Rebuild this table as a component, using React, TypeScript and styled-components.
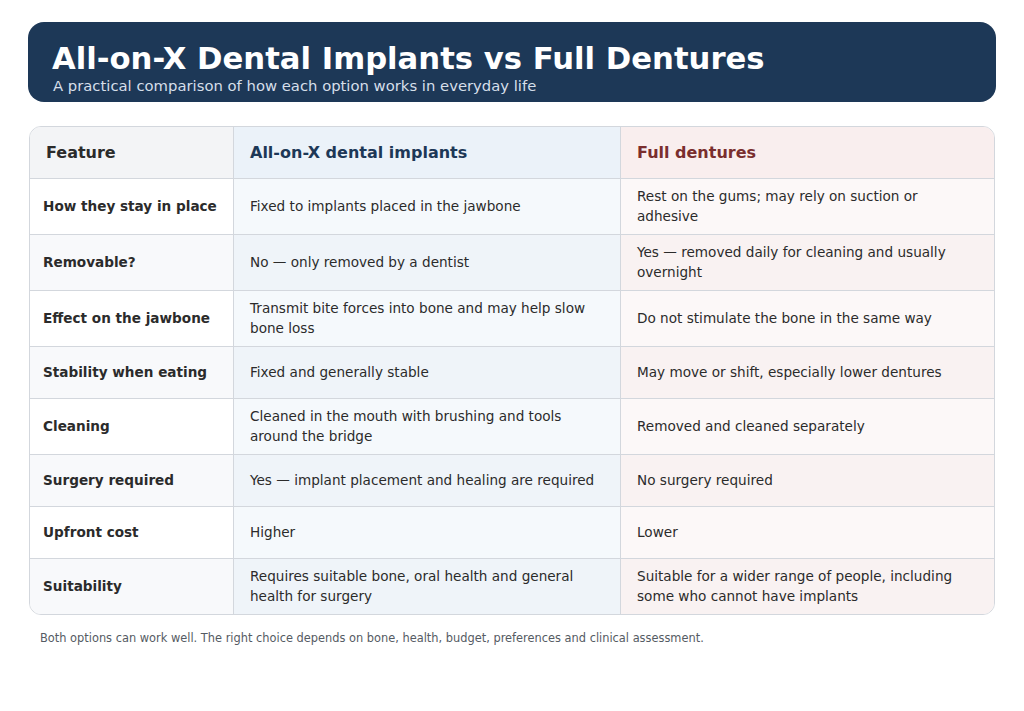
import React from 'react';
import styled, { createGlobalStyle } from 'styled-components';

const GlobalStyle = createGlobalStyle`
  body {
    margin: 0;
    background: #ffffff;
    font-family: 'DejaVu Sans', 'Liberation Sans', sans-serif;
    color: #2b2b2b;
  }
`;

const Page = styled.div`
  width: 1024px;
  padding: 22px 28px;
  box-sizing: border-box;
`;

const Banner = styled.header`
  height: 80px;
  box-sizing: border-box;
  padding: 18px 24px 0;
  background: #1d3857;
  border-radius: 16px;
  color: #ffffff;
`;

const Title = styled.h1`
  margin: 0;
  font-size: 30.7px;
  line-height: 37px;
  font-weight: 700;
`;

const Subtitle = styled.p`
  margin: 0 0 0 1px;
  font-size: 14.8px;
  line-height: 18px;
  color: #d6dfea;
`;

const Table = styled.div`
  margin: 24px 1px 0;
  border: 1px solid #d3d7dd;
  border-radius: 12px;
  overflow: hidden;
  display: grid;
  grid-template-columns: 204px 387px 1fr;
`;

type Tone = 'feature' | 'implant' | 'denture';

const headBg: Record<Tone, string> = {
  feature: '#f3f4f6',
  implant: '#ebf2f9',
  denture: '#f9eeee',
};

const headInk: Record<Tone, string> = {
  feature: '#2b2b2b',
  implant: '#1d3857',
  denture: '#7a2e2e',
};

const cellBg: Record<Tone, [string, string]> = {
  feature: ['#ffffff', '#f8f9fb'],
  implant: ['#f5f9fc', '#eff4f9'],
  denture: ['#fcf8f8', '#f9f2f2'],
};

const HeadCell = styled.div<{ $tone: Tone; $last?: boolean }>`
  height: 52px;
  box-sizing: border-box;
  display: flex;
  align-items: center;
  padding: 0 16px;
  background: ${(p) => headBg[p.$tone]};
  color: ${(p) => headInk[p.$tone]};
  font-size: 16px;
  font-weight: 700;
  border-bottom: 1px solid #d3d7dd;
  border-right: ${(p) => (p.$last ? 'none' : '1px solid #d3d7dd')};
`;

const Cell = styled.div<{ $tone: Tone; $even: boolean; $last?: boolean; $bottom?: boolean }>`
  min-height: 52px;
  box-sizing: border-box;
  display: flex;
  align-items: center;
  padding: 8px 16px 8px ${(p) => (p.$tone === 'feature' ? '13px' : '16px')};
  background: ${(p) => cellBg[p.$tone][p.$even ? 1 : 0]};
  font-size: 13.6px;
  line-height: 19.5px;
  font-weight: ${(p) => (p.$tone === 'feature' ? 700 : 400)};
  color: #2b2b2b;
  border-bottom: ${(p) => (p.$bottom ? 'none' : '1px solid #d3d7dd')};
  border-right: ${(p) => (p.$last ? 'none' : '1px solid #d3d7dd')};
`;

const Note = styled.p`
  margin: 16px 0 0 12px;
  font-size: 11.4px;
  color: #555b63;
`;

const rows: [string, string, string][] = [
  ['How they stay in place', 'Fixed to implants placed in the jawbone', 'Rest on the gums; may rely on suction or adhesive'],
  ['Removable?', 'No — only removed by a dentist', 'Yes — removed daily for cleaning and usually overnight'],
  ['Effect on the jawbone', 'Transmit bite forces into bone and may help slow bone loss', 'Do not stimulate the bone in the same way'],
  ['Stability when eating', 'Fixed and generally stable', 'May move or shift, especially lower dentures'],
  ['Cleaning', 'Cleaned in the mouth with brushing and tools around the bridge', 'Removed and cleaned separately'],
  ['Surgery required', 'Yes — implant placement and healing are required', 'No surgery required'],
  ['Upfront cost', 'Higher', 'Lower'],
  ['Suitability', 'Requires suitable bone, oral health and general health for surgery', 'Suitable for a wider range of people, including some who cannot have implants'],
];

const tones: Tone[] = ['feature', 'implant', 'denture'];

export default function App() {
  return (
    <>
      <GlobalStyle />
      <Page>
        <Banner>
          <Title>All-on-X Dental Implants vs Full Dentures</Title>
          <Subtitle>A practical comparison of how each option works in everyday life</Subtitle>
        </Banner>
        <Table>
          <HeadCell $tone="feature">Feature</HeadCell>
          <HeadCell $tone="implant">All-on-X dental implants</HeadCell>
          <HeadCell $tone="denture" $last>Full dentures</HeadCell>
          {rows.map((row, i) =>
            row.map((text, j) => (
              <Cell
                key={`${i}-${j}`}
                $tone={tones[j]}
                $even={i % 2 === 1}
                $last={j === 2}
                $bottom={i === rows.length - 1}
              >
                {text}
              </Cell>
            ))
          )}
        </Table>
        <Note>
          Both options can work well. The right choice depends on bone, health, budget, preferences and clinical assessment.
        </Note>
      </Page>
    </>
  );
}
